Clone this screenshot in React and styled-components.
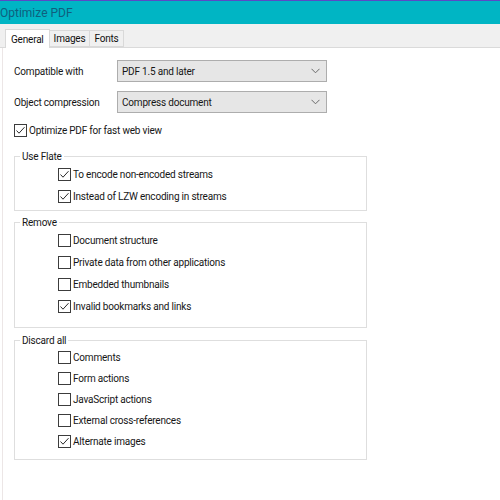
import React from "react";
import styled, { createGlobalStyle } from "styled-components";

const GlobalStyle = createGlobalStyle`
  *, *::before, *::after {
    box-sizing: border-box;
  }
  html, body {
    margin: 0;
    padding: 0;
    background: #ffffff;
  }
  body {
    font-family: Roboto, "Liberation Sans", Arial, sans-serif;
    font-size: 10px;
    letter-spacing: -0.2px;
    color: #161616;
  }
`;

const Window = styled.div`
  width: 500px;
  height: 500px;
  overflow: hidden;
  display: flex;
  flex-direction: column;
  background: #ffffff;
`;

const TitleBar = styled.div`
  height: 24px;
  border-top: 1px solid #5a49c6;
  background: #00b5c4;
  display: flex;
  align-items: center;
`;

const Title = styled.span`
  font-size: 12px;
  letter-spacing: 0;
  color: #0f5f7e;
`;

const TabStrip = styled.div`
  height: 24px;
  background: #f0f0f0;
  border-bottom: 1px solid #dadada;
  display: flex;
  align-items: flex-end;
  padding-left: 5px;
`;

const Tab = styled.div`
  height: ${(p) => (p.$active ? "19px" : "17px")};
  margin-bottom: ${(p) => (p.$active ? "-1px" : "0")};
  padding: 0 ${(p) => (p.$active ? "5px" : "4px")};
  background: ${(p) => (p.$active ? "#ffffff" : "#f0f0f0")};
  border: 1px solid #d9d9d9;
  border-bottom: ${(p) => (p.$active ? "none" : "1px solid #d9d9d9")};
  border-left: ${(p) => (p.$active ? "1px solid #d9d9d9" : "none")};
  display: flex;
  align-items: center;
  color: #111;
`;

const Panel = styled.div`
  flex: 1;
  border-left: 1px solid #ece6e6;
  margin-left: 2px;
  padding: 12px 0 0 11px;
  display: flex;
  flex-direction: column;
`;

const FieldRow = styled.div`
  display: flex;
  align-items: center;
  height: 22px;
  margin-bottom: ${(p) => p.$mb || 0}px;
`;

const FieldLabel = styled.span`
  width: 103px;
`;

const Select = styled.div`
  width: 210px;
  height: 22px;
  border: 1px solid #adadad;
  background: #e6e6e6;
  display: flex;
  align-items: center;
  justify-content: space-between;
  padding: 0 6px 0 4px;
`;

const CheckRow = styled.label`
  display: flex;
  align-items: center;
  height: ${(p) => p.$h || 22}px;
  padding-left: ${(p) => p.$indent || 0}px;
  gap: 2px;
`;

const Box = styled.span`
  width: 13px;
  height: 13px;
  border: 1px solid #3c3c3c;
  background: #ffffff;
  display: inline-flex;
  align-items: center;
  justify-content: center;
`;

const Group = styled.fieldset`
  width: 353px;
  margin: ${(p) => p.$mt || 0}px 0 0 0;
  padding: 0 0 ${(p) => p.$pb || 0}px 0;
  border: 1px solid #dedede;
  min-width: 0;
`;

const Legend = styled.legend`
  margin-left: 5px;
  padding: 0 2px;
  line-height: 13px;
`;

const Chevron = () => (
  <svg width="9" height="6" viewBox="0 0 9 6">
    <polyline points="0.5,0.8 4.5,4.8 8.5,0.8" fill="none" stroke="#6a6a6a" strokeWidth="1" />
  </svg>
);

const Check = ({ checked, label, indent, h }) => (
  <CheckRow $indent={indent} $h={h}>
    <Box>
      {checked && (
        <svg width="11" height="11" viewBox="0 0 11 11">
          <polyline points="1.5,5.5 4,8.2 9.5,2.2" fill="none" stroke="#2a2a2a" strokeWidth="1" />
        </svg>
      )}
    </Box>
    <span>{label}</span>
  </CheckRow>
);

const flate = [
  { label: "To encode non-encoded streams", checked: true },
  { label: "Instead of LZW encoding in streams", checked: true },
];

const remove = [
  { label: "Document structure", checked: false },
  { label: "Private data from other applications", checked: false },
  { label: "Embedded thumbnails", checked: false },
  { label: "Invalid bookmarks and links", checked: true },
];

const discard = [
  { label: "Comments", checked: false },
  { label: "Form actions", checked: false },
  { label: "JavaScript actions", checked: false },
  { label: "External cross-references", checked: false },
  { label: "Alternate images", checked: true },
];

export default function App() {
  return (
    <Window>
      <GlobalStyle />
      <TitleBar>
        <Title>Optimize PDF</Title>
      </TitleBar>
      <TabStrip>
        <Tab $active>General</Tab>
        <Tab>Images</Tab>
        <Tab>Fonts</Tab>
      </TabStrip>
      <Panel>
        <FieldRow $mb={9}>
          <FieldLabel>Compatible with</FieldLabel>
          <Select>
            <span>PDF 1.5 and later</span>
            <Chevron />
          </Select>
        </FieldRow>
        <FieldRow $mb={10}>
          <FieldLabel>Object compression</FieldLabel>
          <Select>
            <span>Compress document</span>
            <Chevron />
          </Select>
        </FieldRow>
        <Check checked label="Optimize PDF for fast web view" h={14} />

        <Group $mt={13} $pb={3}>
          <Legend>Use Flate</Legend>
          {flate.map((c) => (
            <Check key={c.label} {...c} indent={43} h={22} />
          ))}
        </Group>

        <Group $mt={5} $pb={10}>
          <Legend>Remove</Legend>
          {remove.map((c) => (
            <Check key={c.label} {...c} indent={43} h={22} />
          ))}
        </Group>

        <Group $mt={6} $pb={7}>
          <Legend>Discard all</Legend>
          {discard.map((c) => (
            <Check key={c.label} {...c} indent={43} h={21} />
          ))}
        </Group>
      </Panel>
    </Window>
  );
}
